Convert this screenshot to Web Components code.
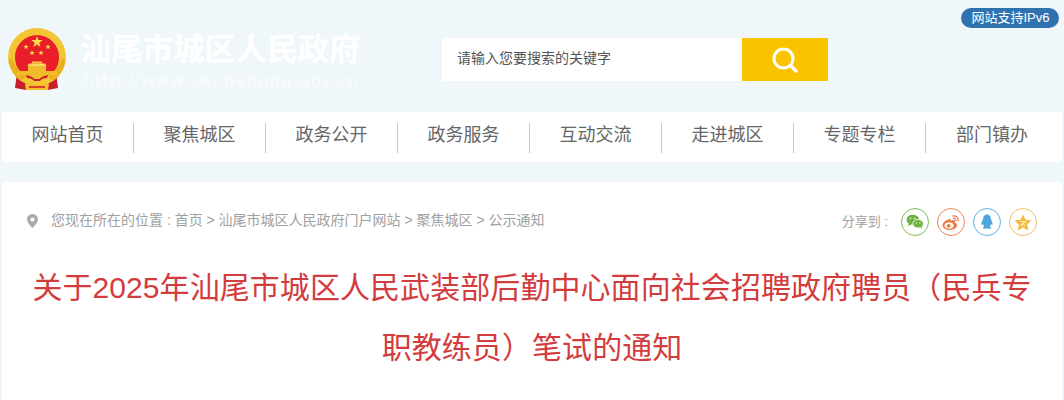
<!DOCTYPE html>
<html><head><meta charset="utf-8">
<style>
html,body{margin:0;padding:0;background:#f0f7fb;height:400px;overflow:hidden}
body{font-family:"Liberation Sans","Noto Sans CJK SC",sans-serif}
</style></head><body>
<site-header></site-header>
<site-nav></site-nav>
<article-panel></article-panel>
<script>
function def(name,html){customElements.define(name,class extends HTMLElement{constructor(){super();this.attachShadow({mode:'open'}).innerHTML=html}})}
const F='"Liberation Sans","Noto Sans CJK SC",sans-serif';
const star=(x,y,r)=>{let p=[];for(let i=0;i<10;i++){const a=-Math.PI/2+i*Math.PI/5,q=i%2?r*.4:r;p.push((x+q*Math.cos(a)).toFixed(1)+','+(y+q*Math.sin(a)).toFixed(1))}return `<polygon fill="#fbdc4a" points="${p.join(' ')}"/>`};
def('gov-emblem',`<style>:host{display:block;width:60px;height:64px;flex:none}svg{display:block}</style>
<svg width="60" height="64" viewBox="8 28 60 64">
<path d="M17 72 L15 88 L26 90 L48 90 L58 88 L56 72Z" fill="#c8202c"/>
<ellipse cx="37" cy="57" rx="29" ry="29" fill="#f4c534"/>
<path d="M8.500 60 Q11 74 21 81 L27 76 Q15 70 12 58Z M65.500 60 Q63 74 53 81 L47 76 Q59 70 62 58Z" fill="#eab020"/>
<path d="M37 35 A22 22 0 0 1 59 57 Q59 66 54 71 L20 71 Q15 66 15 57 A22 22 0 0 1 37 35Z" fill="#e81f28"/>
${star(37,42,6)}${star(26,47,2.8)}${star(48,47,2.8)}${star(32,53,2.8)}${star(41,53,2.8)}
<path d="M32 61.500h10v2h-10z" fill="#f6c93f"/><path d="M29 63.500h16l1.500 2.500h-19z" fill="#f9d65a"/><path d="M28 66h18v5H28z" fill="#f2b92e"/>
<path d="M18 71 H56 Q59 73 57 76 Q48 74 42 78 Q38 81 37 79 Q35 81 32 78 Q26 74 17 76 Q15 73 18 71Z" fill="#f1bb2c"/>
<path d="M26 75 Q32 76 34.500 79 H39.500 Q42 76 48 75 L47 78 Q42 78 40 81 H34 Q32 78 27 78Z" fill="#c8202c"/>
<path d="M25 84 Q32 82 37 85 Q42 82 49 84 L48 90 H26Z" fill="#f3c130"/>
<path d="M29 86h16v2H29z" fill="#d8402a"/>
</svg>`);
def('search-box',`<style>:host{display:flex;width:386px;height:43px;background:#fff}
.t{flex:1;padding-left:15px;font:14px/40px ${F};color:#555}
.b{width:86px;height:43px;background:#fac300;display:flex;align-items:center;justify-content:center}</style>
<div class="t">请输入您要搜索的关键字</div>
<div class="b"><svg width="28" height="28" viewBox="0 0 28 28" fill="none" stroke="#fff"><circle cx="12.500" cy="12.500" r="9.500" stroke-width="3"/><path d="M19.500 19.500L25 25" stroke-width="3.400" stroke-linecap="round"/></svg></div>`);
def('site-header',`<style>:host{display:block;height:112px;position:relative}
.row{display:flex;height:112px}
.logo{display:flex;margin:28px 0 0 8px;width:434px}
.names{margin:2px 0 0 12px;color:#fff}
.n{font:bold 31px/38px ${F};letter-spacing:.15px;white-space:nowrap;margin-top:1px}
.u{font:16px/18px "DejaVu Sans",sans-serif;letter-spacing:1.350px;color:#fff;opacity:.6;margin:3px 0 0 3px;white-space:nowrap}
search-box{margin-top:38px}
.v6{position:absolute;left:961px;top:8px;width:98px;height:20px;background:#2f72b0;border-radius:10px;color:#fff;font:13px/20px ${F};text-align:center;white-space:nowrap;padding-left:1px;box-sizing:border-box}</style>
<div class="row"><div class="logo"><gov-emblem></gov-emblem><div class="names"><div class="n">汕尾市城区人民政府</div><div class="u">http://www.swchengqu.gov.cn</div></div></div><search-box></search-box></div>
<div class="v6">网站支持IPv6</div>`);
def('site-nav',`<style>:host{display:flex;margin:0 2px;height:50px;background:#fff;align-items:flex-start;width:1060px;box-sizing:border-box;padding-top:11px}
a{width:132px;height:30px;font:18px/25px ${F};color:#666;text-align:center;border-right:1px solid #c8c8c8;box-sizing:border-box;white-space:nowrap;flex:none}
a:last-child{border:0}</style>
<a>网站首页</a><a>聚焦城区</a><a>政务公开</a><a>政务服务</a><a>互动交流</a><a>走进城区</a><a>专题专栏</a><a>部门镇办</a>`);
def('bread-crumb',`<style>:host{display:flex;align-items:flex-start;font:14px/20px ${F};color:#a0a0a0;white-space:nowrap;height:24px}
svg{margin-right:13px;margin-top:4px}span{line-height:20px}</style>
<svg width="11" height="14" viewBox="0 0 11 14"><path fill-rule="evenodd" fill="#aaa" d="M5.500 0A5.500 5.500 0 0 0 0 5.500C0 9 5.500 14 5.500 14S11 9 11 5.500A5.500 5.500 0 0 0 5.500 0ZM5.500 3.400a2.100 2.100 0 1 1 0 4.200 2.100 2.100 0 0 1 0-4.200Z"/></svg>
<span>您现在所在的位置 : 首页 &gt; 汕尾市城区人民政府门户网站 &gt; 聚焦城区 &gt; 公示通知</span>`);
def('share-bar',`<style>:host{display:flex;align-items:center;gap:8px;font:13px/28px ${F};color:#a0a0a0;white-space:nowrap}
span{margin-right:5px}
i{display:flex;width:28px;height:28px;box-sizing:border-box;border-radius:50%;border:1px solid;align-items:center;justify-content:center}</style>
<span>分享到 :</span>
<i style="border-color:#7dbb55"><svg width="18" height="16" viewBox="0 0 20 18" fill="#6cb33f"><ellipse cx="7.500" cy="6.500" rx="7" ry="5.600"/><path d="M3 10l-1 3.500 4-2z"/><ellipse cx="13.500" cy="11" rx="6" ry="4.800" stroke="#fff" stroke-width="1"/><path d="M16 15l2 2-.3-3z"/><g fill="#fff"><circle cx="5" cy="5" r=".9"/><circle cx="9.500" cy="5" r=".9"/><circle cx="11.500" cy="10" r=".7"/><circle cx="15.500" cy="10" r=".7"/></g></svg></i>
<i style="border-color:#ec8358"><svg width="20" height="17" viewBox="0 0 20 18"><path fill="#ea7a45" d="M8 5.500C4 6.500 1 9.500 1 12c0 3 4 5 7.500 5 4.500 0 8-2.500 8-5 0-2-2-2.800-2.500-3 .6-1.500 0-3-2.500-2.500L9.500 7.200C10 5.500 9.500 5 8 5.500Z"/><ellipse cx="8" cy="12.300" rx="4.800" ry="3.300" fill="#fff"/><circle cx="7.500" cy="12.500" r="2" fill="#ea7a45"/><path d="M12 2c3-.6 6 1.500 5.600 5M12.500 4.500c1.700-.2 2.800 1 2.600 2.500" fill="none" stroke="#ea7a45" stroke-width="1.300" stroke-linecap="round"/></svg></i>
<i style="border-color:#5db0e6"><svg width="14" height="16" viewBox="0 0 16 19" fill="#4aa5e0"><path d="M8 .500C4.500 .500 3.500 3.500 3.300 6.500 2 8.500 1 11 1.500 13c.5.500 1.500-.5 1.800-1 .3 1.200.8 2.200 1.500 3-1 .5-1.800 1-1.500 1.800C4 18 6.500 17.700 8 17c1.500.7 4 1 4.700-.2.300-.8-.5-1.300-1.500-1.800.7-.8 1.200-1.800 1.500-3 .3.500 1.300 1.500 1.800 1 .5-2-.5-4.500-1.800-6.500C12.500 3.500 11.500 .5 8 .5Z"/></svg></i>
<i style="border-color:#f4c063"><svg width="18" height="17" viewBox="0 0 18 17"><polygon fill="#f6b93b" points="9,.5 11.600,5.700 17.500,6.500 13.200,10.600 14.300,16.500 9,13.600 3.700,16.500 4.800,10.600 .5,6.500 6.400,5.700"/><path d="M6 7.500h5.500L7 11h4.500" fill="none" stroke="#fde9b8" stroke-width="1.200"/></svg></i>`);
def('article-panel',`<style>:host{display:block;margin:20px 2px 0;width:1060px;height:218px;background:#fff;box-sizing:border-box;padding-top:23px;overflow:hidden}
.top{display:flex;justify-content:space-between;align-items:center;height:34px;padding:0 25px}
h1{margin:19px 0 0;font:normal 30px/60px ${F};letter-spacing:.07px;color:#d33c3c;text-align:center;padding:0 25px}</style>
<div class="top"><bread-crumb></bread-crumb><share-bar></share-bar></div>
<h1>关于2025年汕尾市城区人民武装部后勤中心面向社会招聘政府聘员（民兵专职教练员）笔试的通知</h1>`);
</script>
</body></html>
